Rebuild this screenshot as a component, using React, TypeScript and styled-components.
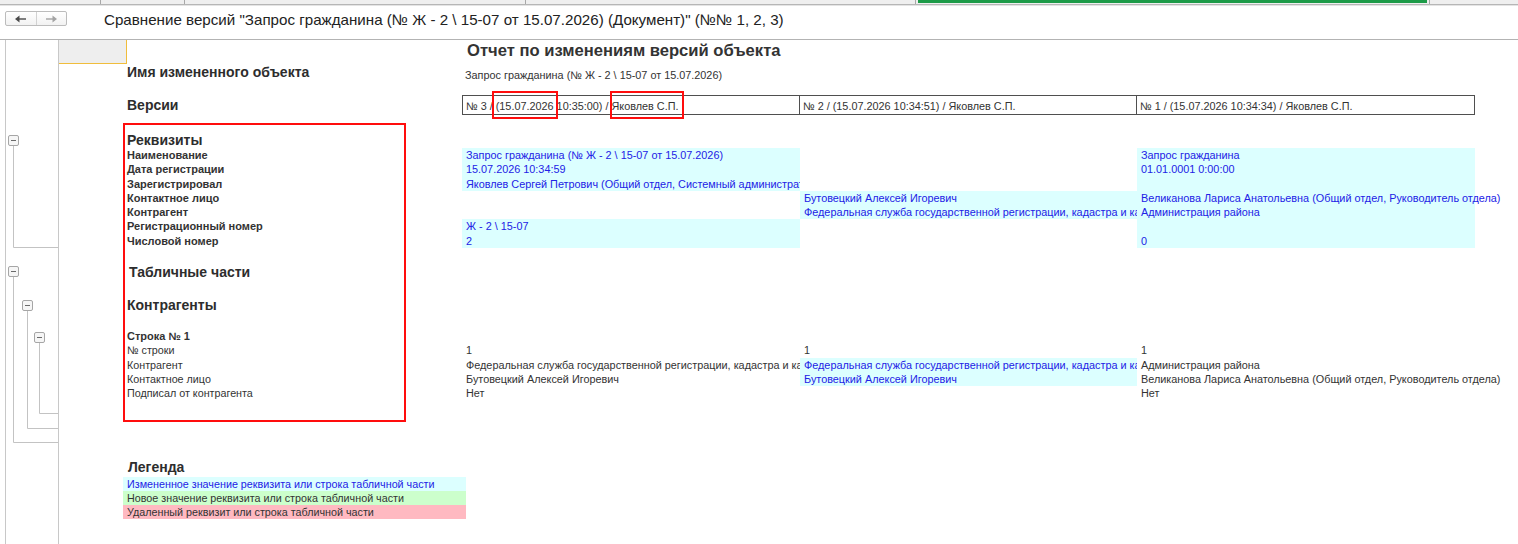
import React from "react";
import styled, { createGlobalStyle } from "styled-components";

type Cell = { text?: string; changed?: boolean };
type Row = { label: string; cells: Cell[] };

const objectName = "Запрос гражданина (№ Ж - 2 \\ 15-07 от 15.07.2026)";

const versions = [
  "№ 3 / (15.07.2026 10:35:00) / Яковлев С.П.",
  "№ 2 / (15.07.2026 10:34:51) / Яковлев С.П.",
  "№ 1 / (15.07.2026 10:34:34) / Яковлев С.П.",
];

const attributes: Row[] = [
  {
    label: "Наименование",
    cells: [{ text: objectName, changed: true }, {}, { text: "Запрос гражданина", changed: true }],
  },
  {
    label: "Дата регистрации",
    cells: [{ text: "15.07.2026 10:34:59", changed: true }, {}, { text: "01.01.0001 0:00:00", changed: true }],
  },
  {
    label: "Зарегистрировал",
    cells: [
      { text: "Яковлев Сергей Петрович (Общий отдел, Системный администратор)", changed: true },
      {},
      { changed: true },
    ],
  },
  {
    label: "Контактное лицо",
    cells: [
      {},
      { text: "Бутовецкий Алексей Игоревич", changed: true },
      { text: "Великанова Лариса Анатольевна (Общий отдел, Руководитель отдела)", changed: true },
    ],
  },
  {
    label: "Контрагент",
    cells: [
      {},
      { text: "Федеральная служба государственной регистрации, кадастра и картографии", changed: true },
      { text: "Администрация района", changed: true },
    ],
  },
  {
    label: "Регистрационный номер",
    cells: [{ text: "Ж - 2 \\ 15-07", changed: true }, {}, { changed: true }],
  },
  {
    label: "Числовой номер",
    cells: [{ text: "2", changed: true }, {}, { text: "0", changed: true }],
  },
];

const counterpartyRows: Row[] = [
  { label: "№ строки", cells: [{ text: "1" }, { text: "1" }, { text: "1" }] },
  {
    label: "Контрагент",
    cells: [
      { text: "Федеральная служба государственной регистрации, кадастра и картографии" },
      { text: "Федеральная служба государственной регистрации, кадастра и картографии", changed: true },
      { text: "Администрация района" },
    ],
  },
  {
    label: "Контактное лицо",
    cells: [
      { text: "Бутовецкий Алексей Игоревич" },
      { text: "Бутовецкий Алексей Игоревич", changed: true },
      { text: "Великанова Лариса Анатольевна (Общий отдел, Руководитель отдела)" },
    ],
  },
  { label: "Подписал от контрагента", cells: [{ text: "Нет" }, {}, { text: "Нет" }] },
];

const legend: { text: string; kind: "changed" | "added" | "removed" }[] = [
  { text: "Измененное значение реквизита или строка табличной части", kind: "changed" },
  { text: "Новое значение реквизита или строка табличной части", kind: "added" },
  { text: "Удаленный реквизит или строка табличной части", kind: "removed" },
];

const tabs = [100, 84, 341, 390, 514, 89];

const GlobalStyle = createGlobalStyle`
  html, body {
    margin: 0;
    padding: 0;
    background: #fff;
  }
  body {
    font-family: "Liberation Sans", Arial, sans-serif;
    color: #333;
  }
`;

const NavArrow = ({ dir, muted }: { dir: "left" | "right"; muted?: boolean }) => (
  <svg width="11" height="8" viewBox="0 0 11 8">
    <g fill={muted ? "#a3a3a3" : "#4a4a4a"} stroke={muted ? "#a3a3a3" : "#4a4a4a"}>
      {dir === "left" ? (
        <>
          <line x1="3" y1="4" x2="11" y2="4" strokeWidth="1.4" />
          <polygon points="0,4 4.5,0.5 4.5,7.5" stroke="none" />
        </>
      ) : (
        <>
          <line x1="0" y1="4" x2="8" y2="4" strokeWidth="1.4" />
          <polygon points="11,4 6.5,0.5 6.5,7.5" stroke="none" />
        </>
      )}
    </g>
  </svg>
);

// grouping outline in the left gutter: collapse boxes with their bracket lines
const groups = [
  { x: 7, y: 100, end: 207 },
  { x: 7, y: 231, end: 402 },
  { x: 21, y: 265, end: 388 },
  { x: 33, y: 297, end: 373 },
];

const Outline = () => (
  <svg width="52" height="504" viewBox="0 0 52 504">
    {groups.map((g) => (
      <g key={g.y}>
        <path
          d={`M${g.x + 0.5} ${g.y + 5} V${g.end + 0.5} H52`}
          fill="none"
          stroke="#c3c3c3"
          strokeWidth="1"
        />
        <rect x={g.x - 4.5} y={g.y - 4.5} width="10" height="10" rx="1.5" fill="#f6f6f6" stroke="#a6a6a6" />
        <line x1={g.x - 2} y1={g.y + 0.5} x2={g.x + 3} y2={g.y + 0.5} stroke="#6a6a6a" />
      </g>
    ))}
  </svg>
);

export default function App() {
  return (
    <>
      <GlobalStyle />
      <Window>
        <TabStrip>
          {tabs.map((w, i) => (
            <Tab key={i} $w={w}>
              {i === 4 && <ActiveMark />}
            </Tab>
          ))}
        </TabStrip>

        <Header>
          <NavGroup>
            <NavButton>
              <NavArrow dir="left" />
            </NavButton>
            <NavButton>
              <NavArrow dir="right" muted />
            </NavButton>
          </NavGroup>
          <Title>
            Сравнение версий "Запрос гражданина (№ Ж - 2 \ 15-07 от 15.07.2026) (Документ)" (№№ 1, 2, 3)
          </Title>
        </Header>

        <Body>
          <Gutter>
            <Outline />
          </Gutter>

          <Sheet>
            <TopRow>
              <Corner />
              <span />
              <ReportTitle>Отчет по изменениям версий объекта</ReportTitle>
            </TopRow>

            <ReportRow $h={24}>
              <Heading>Имя измененного объекта</Heading>
              <NameValue>{objectName}</NameValue>
            </ReportRow>

            <ReportRow $h={20} $mt={7}>
              <Heading $center>Версии</Heading>
              {versions.map((v, i) => (
                <VersionCell key={v} $first={i === 0}>
                  {v}
                </VersionCell>
              ))}
            </ReportRow>

            <ReportRow $h={17} $mt={16}>
              <Heading $center>Реквизиты</Heading>
            </ReportRow>
            {attributes.map((row) => (
              <ReportRow key={row.label} $h={14.3}>
                <FieldLabel $bold>{row.label}</FieldLabel>
                {row.cells.map((c, i) => (
                  <ValueCell key={i} $changed={c.changed} $last={i === 2}>
                    {c.text}
                  </ValueCell>
                ))}
              </ReportRow>
            ))}

            <ReportRow $h={18} $mt={15}>
              <Heading $center $shift={2}>
                Табличные части
              </Heading>
            </ReportRow>

            <ReportRow $h={18} $mt={15}>
              <Heading $center>Контрагенты</Heading>
            </ReportRow>

            <ReportRow $h={14.3} $mt={15}>
              <FieldLabel $bold>Строка № 1</FieldLabel>
            </ReportRow>
            {counterpartyRows.map((row) => (
              <ReportRow key={row.label} $h={14.3}>
                <FieldLabel>{row.label}</FieldLabel>
                {row.cells.map((c, i) => (
                  <ValueCell key={i} $changed={c.changed} $last={i === 2}>
                    {c.text}
                  </ValueCell>
                ))}
              </ReportRow>
            ))}

            <ReportRow $h={18} $mt={57}>
              <Heading $center $shift={1}>
                Легенда
              </Heading>
            </ReportRow>
            <Legend>
              {legend.map((l) => (
                <LegendItem key={l.kind} $kind={l.kind}>
                  {l.text}
                </LegendItem>
              ))}
            </Legend>
          </Sheet>
        </Body>

        <Marker $x={123} $y={123} $w={283} $h={299} />
        <Marker $x={492} $y={91} $w={66} $h={28} />
        <Marker $x={610} $y={91} $w={74} $h={28} />
      </Window>
    </>
  );
}

const Window = styled.div`
  position: relative;
  width: 1518px;
  height: 544px;
  overflow: hidden;
  background: #fff;
`;

const TabStrip = styled.div`
  display: flex;
  height: 4px;
  background: #efefef;
  border-bottom: 1px solid #b6b6b6;
`;

const Tab = styled.div<{ $w: number }>`
  width: ${({ $w }) => $w}px;
  flex-shrink: 0;
  box-sizing: border-box;
  padding: 0 2px;
  border-left: 1px solid #a8a8a8;

  &:first-child {
    border-left: none;
  }
`;

const ActiveMark = styled.div`
  height: 3px;
  background: #1d9b48;
`;

const Header = styled.header`
  display: flex;
  align-items: flex-start;
  gap: 37px;
  height: 35px;
  box-sizing: border-box;
  padding: 5px 0 0 5px;
  border-top: 1px solid #e4e4e4;
  border-bottom: 1px solid #b3b3b3;
`;

const NavGroup = styled.div`
  display: flex;
  width: 62px;
  height: 15px;
  box-sizing: border-box;
  border: 1px solid #bcbcbc;
  border-radius: 2px;
  background: linear-gradient(#ffffff, #f2f2f2);
`;

const NavButton = styled.div`
  flex: 1;
  display: flex;
  align-items: center;
  justify-content: center;

  & + & {
    border-left: 1px solid #d2d2d2;
  }
`;

const Title = styled.div`
  font-size: 15.15px;
  line-height: 17px;
  color: #222;
  white-space: nowrap;
`;

const Body = styled.div`
  display: flex;
  height: 504px;
`;

const Gutter = styled.div`
  flex-shrink: 0;
  width: 52px;
  margin-left: 5px;
  border-left: 1px solid #c8c8c8;
  border-right: 1px solid #c8c8c8;

  svg {
    display: block;
  }
`;

const Sheet = styled.div`
  flex: 1;
  display: flex;
  flex-direction: column;
`;

const TopRow = styled.div`
  display: grid;
  grid-template-columns: 68px 335px 1fr;
  height: 24px;
`;

const Corner = styled.div`
  box-sizing: border-box;
  background: #eeeeee;
  border-right: 1px solid #f0bd3c;
  border-bottom: 1px solid #f0bd3c;
`;

const ReportTitle = styled.h1`
  margin: 0;
  padding-left: 5px;
  font-size: 16.6px;
  line-height: 22px;
  font-weight: bold;
  color: #333;
  white-space: nowrap;
`;

const ReportRow = styled.div<{ $h: number; $mt?: number }>`
  display: grid;
  grid-template-columns: 403px 338px 337px 338px;
  height: ${({ $h }) => $h}px;
  margin-top: ${({ $mt }) => $mt ?? 0}px;
  flex-shrink: 0;
`;

const Heading = styled.div<{ $center?: boolean; $shift?: number }>`
  grid-column: 1;
  display: flex;
  align-items: ${({ $center }) => ($center ? "center" : "flex-start")};
  padding-left: ${({ $shift }) => 68 + ($shift ?? 0)}px;
  font-size: 14px;
  line-height: 16px;
  font-weight: bold;
  color: #2d2d2d;
  white-space: nowrap;
`;

const FieldLabel = styled.div<{ $bold?: boolean }>`
  padding-left: 68px;
  font-size: ${({ $bold }) => ($bold ? "11px" : "10.75px")};
  line-height: 14.3px;
  font-weight: ${({ $bold }) => ($bold ? "bold" : "normal")};
  color: #333;
  white-space: nowrap;
`;

const NameValue = styled.div`
  grid-column: 2 / span 3;
  padding: 5px 0 0 3px;
  font-size: 10.85px;
  line-height: 13px;
  color: #333;
  white-space: nowrap;
`;

const VersionCell = styled.div<{ $first?: boolean }>`
  display: flex;
  align-items: center;
  box-sizing: border-box;
  padding: 1px 0 0 3px;
  border: 1px solid #4f4f4f;
  border-left-width: ${({ $first }) => ($first ? 1 : 0)}px;
  font-size: 10.85px;
  color: #333;
  white-space: nowrap;
  overflow: hidden;
`;

const ValueCell = styled.div<{ $changed?: boolean; $last?: boolean }>`
  padding-left: 4px;
  font-size: 10.85px;
  line-height: 14.3px;
  white-space: nowrap;
  overflow: ${({ $last }) => ($last ? "visible" : "hidden")};
  background: ${({ $changed }) => ($changed ? "#dcffff" : "transparent")};
  color: ${({ $changed }) => ($changed ? "#2222e6" : "#333")};
`;

const Legend = styled.div`
  display: flex;
  flex-direction: column;
  width: 343px;
  margin: 1px 0 0 64px;
`;

const legendColors = {
  changed: { bg: "#dcffff", fg: "#2222e6" },
  added: { bg: "#ccffcc", fg: "#333" },
  removed: { bg: "#ffb9c1", fg: "#333" },
};

const LegendItem = styled.div<{ $kind: keyof typeof legendColors }>`
  height: 14px;
  padding-left: 4px;
  font-size: 10.75px;
  line-height: 14px;
  white-space: nowrap;
  background: ${({ $kind }) => legendColors[$kind].bg};
  color: ${({ $kind }) => legendColors[$kind].fg};
`;

const Marker = styled.div<{ $x: number; $y: number; $w: number; $h: number }>`
  position: absolute;
  left: ${({ $x }) => $x}px;
  top: ${({ $y }) => $y}px;
  width: ${({ $w }) => $w}px;
  height: ${({ $h }) => $h}px;
  box-sizing: border-box;
  border: 2px solid #ff0d0d;
  pointer-events: none;
`;
